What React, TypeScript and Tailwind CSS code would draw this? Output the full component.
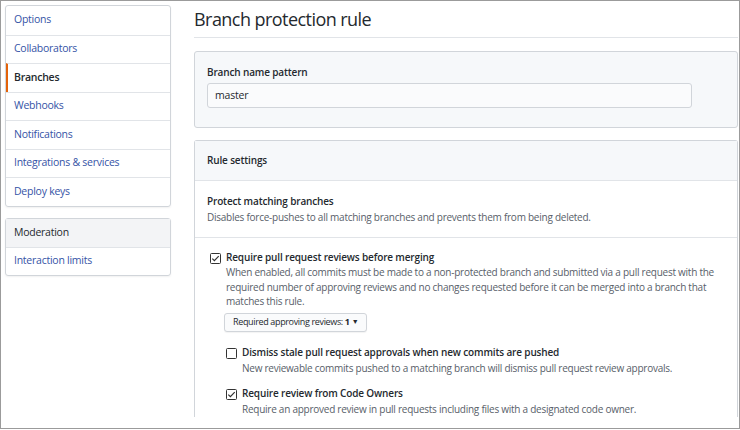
import React from "react";

const navItems = [
  "Options",
  "Collaborators",
  "Branches",
  "Webhooks",
  "Notifications",
  "Integrations & services",
  "Deploy keys",
];

function Checkbox({ checked }: { checked: boolean }) {
  return (
    <svg width="11" height="11" viewBox="0 0 11 11" className="shrink-0">
      <rect x="0.5" y="0.5" width="10" height="10" rx="1" fill="#fff" stroke="#333" />
      {checked && (
        <path d="M2.3 5.6 L4.4 7.7 L8.7 3.2" fill="none" stroke="#333" strokeWidth="1.2" />
      )}
    </svg>
  );
}

function Option({
  checked,
  title,
  children,
}: {
  checked: boolean;
  title: string;
  children: React.ReactNode;
}) {
  return (
    <div className="flex gap-[5px]">
      <div className="pt-[3px]">
        <Checkbox checked={checked} />
      </div>
      <div>
        <p className="text-[10px] font-semibold leading-[15px] tracking-[-0.15px] text-[#24292e]">
          {title}
        </p>
        <div className="text-[10px] leading-[14.5px] tracking-[-0.25px] text-[#586069]">
          {children}
        </div>
      </div>
    </div>
  );
}

export default function App() {
  return (
    <div
      className="flex h-[429px] w-[740px] overflow-hidden border border-[#9b9b9b] bg-white"
      style={{ fontFamily: '"Open Sans", "Noto Sans", sans-serif' }}
    >
      <aside className="w-[170px] shrink-0 pl-[4px] pt-[4px]">
        <nav className="rounded-[3px] border border-[#d1d5da] text-[10.5px] tracking-[-0.25px] shadow-[0_1px_2px_rgba(0,0,0,0.06)]">
          {navItems.map((item, i) => (
            <div
              key={item}
              className={
                "flex h-[28.5px] items-center px-[8px] " +
                (i > 0 ? "border-t border-[#e1e4e8] " : "") +
                (item === "Branches"
                  ? "border-l-2 border-l-[#e36209] pl-[6px] font-semibold text-[#24292e]"
                  : "text-[#3553a6]")
              }
            >
              {item}
            </div>
          ))}
        </nav>
        <nav className="mt-[11px] rounded-[3px] border border-[#d1d5da] text-[10.5px] tracking-[-0.25px] shadow-[0_1px_2px_rgba(0,0,0,0.06)]">
          <div className="flex h-[28px] items-center bg-[#f3f4f6] px-[8px] text-[#24292e]">
            Moderation
          </div>
          <div className="flex h-[28px] items-center border-t border-[#e1e4e8] px-[8px] text-[#3553a6]">
            Interaction limits
          </div>
        </nav>
      </aside>

      <main className="ml-[23px] flex-1 pr-[1px]">
        <div className="border-b border-[#e1e4e8] pb-[4px] pt-[5px]">
          <h1 className="text-[18px] leading-[27px] tracking-[-0.55px] text-[#24292e]">
            Branch protection rule
          </h1>
        </div>

        <section className="mt-[13px] h-[77px] rounded-[3px] border border-[#d1d5da] bg-[#f6f8fa] px-[12px] pt-[13px]">
          <label className="block text-[10px] font-semibold leading-[15px] tracking-[-0.15px] text-[#24292e]">
            Branch name pattern
          </label>
          <div className="mt-[3px] flex h-[25px] w-[485px] items-center rounded-[3px] border border-[#d1d5da] bg-[#fafbfc] px-[7px] text-[10.5px] tracking-[-0.2px] text-[#24292e]">
            master
          </div>
        </section>

        <section className="mt-[12px] rounded-t-[3px] border border-b-0 border-[#d1d5da]">
          <div className="flex h-[40px] items-center border-b border-[#e1e4e8] bg-[#f6f8fa] px-[12px] text-[10px] font-semibold tracking-[-0.15px] text-[#24292e]">
            Rule settings
          </div>
          <div className="border-b border-[#e1e4e8] px-[12px] pb-[12px] pt-[13px]">
            <p className="text-[10px] font-semibold leading-[15px] tracking-[-0.15px] text-[#24292e]">
              Protect matching branches
            </p>
            <p className="text-[10px] leading-[16px] tracking-[-0.25px] text-[#586069]">
              Disables force-pushes to all matching branches and prevents them from being deleted.
            </p>
          </div>
          <div className="px-[15px] pt-[12px]">
            <Option checked title="Require pull request reviews before merging">
              <p className="w-[490px]">
                When enabled, all commits must be made to a non-protected branch and submitted via
                a pull request with the required number of approving reviews and no changes
                requested before it can be merged into a branch that matches this rule.
              </p>
              <button className="-ml-[2px] mt-[4px] flex h-[19px] items-center rounded-[3px] border border-[#d1d5da] bg-[#fafbfc] px-[8px] text-[9px] tracking-[-0.35px] text-[#24292e] shadow-[0_1px_1px_rgba(0,0,0,0.05)]">
                Required approving reviews: <b className="ml-[2px]">1</b>
                <span className="ml-[2px] text-[7px]">▼</span>
              </button>
            </Option>
            <div className="ml-[16px] mt-[13px] flex flex-col gap-[11px]">
              <Option checked={false} title="Dismiss stale pull request approvals when new commits are pushed">
                <p className="pt-[1px]">
                  New reviewable commits pushed to a matching branch will dismiss pull request
                  review approvals.
                </p>
              </Option>
              <Option checked title="Require review from Code Owners">
                <p className="pt-[1px]">
                  Require an approved review in pull requests including files with a designated
                  code owner.
                </p>
              </Option>
            </div>
          </div>
        </section>
      </main>
    </div>
  );
}
